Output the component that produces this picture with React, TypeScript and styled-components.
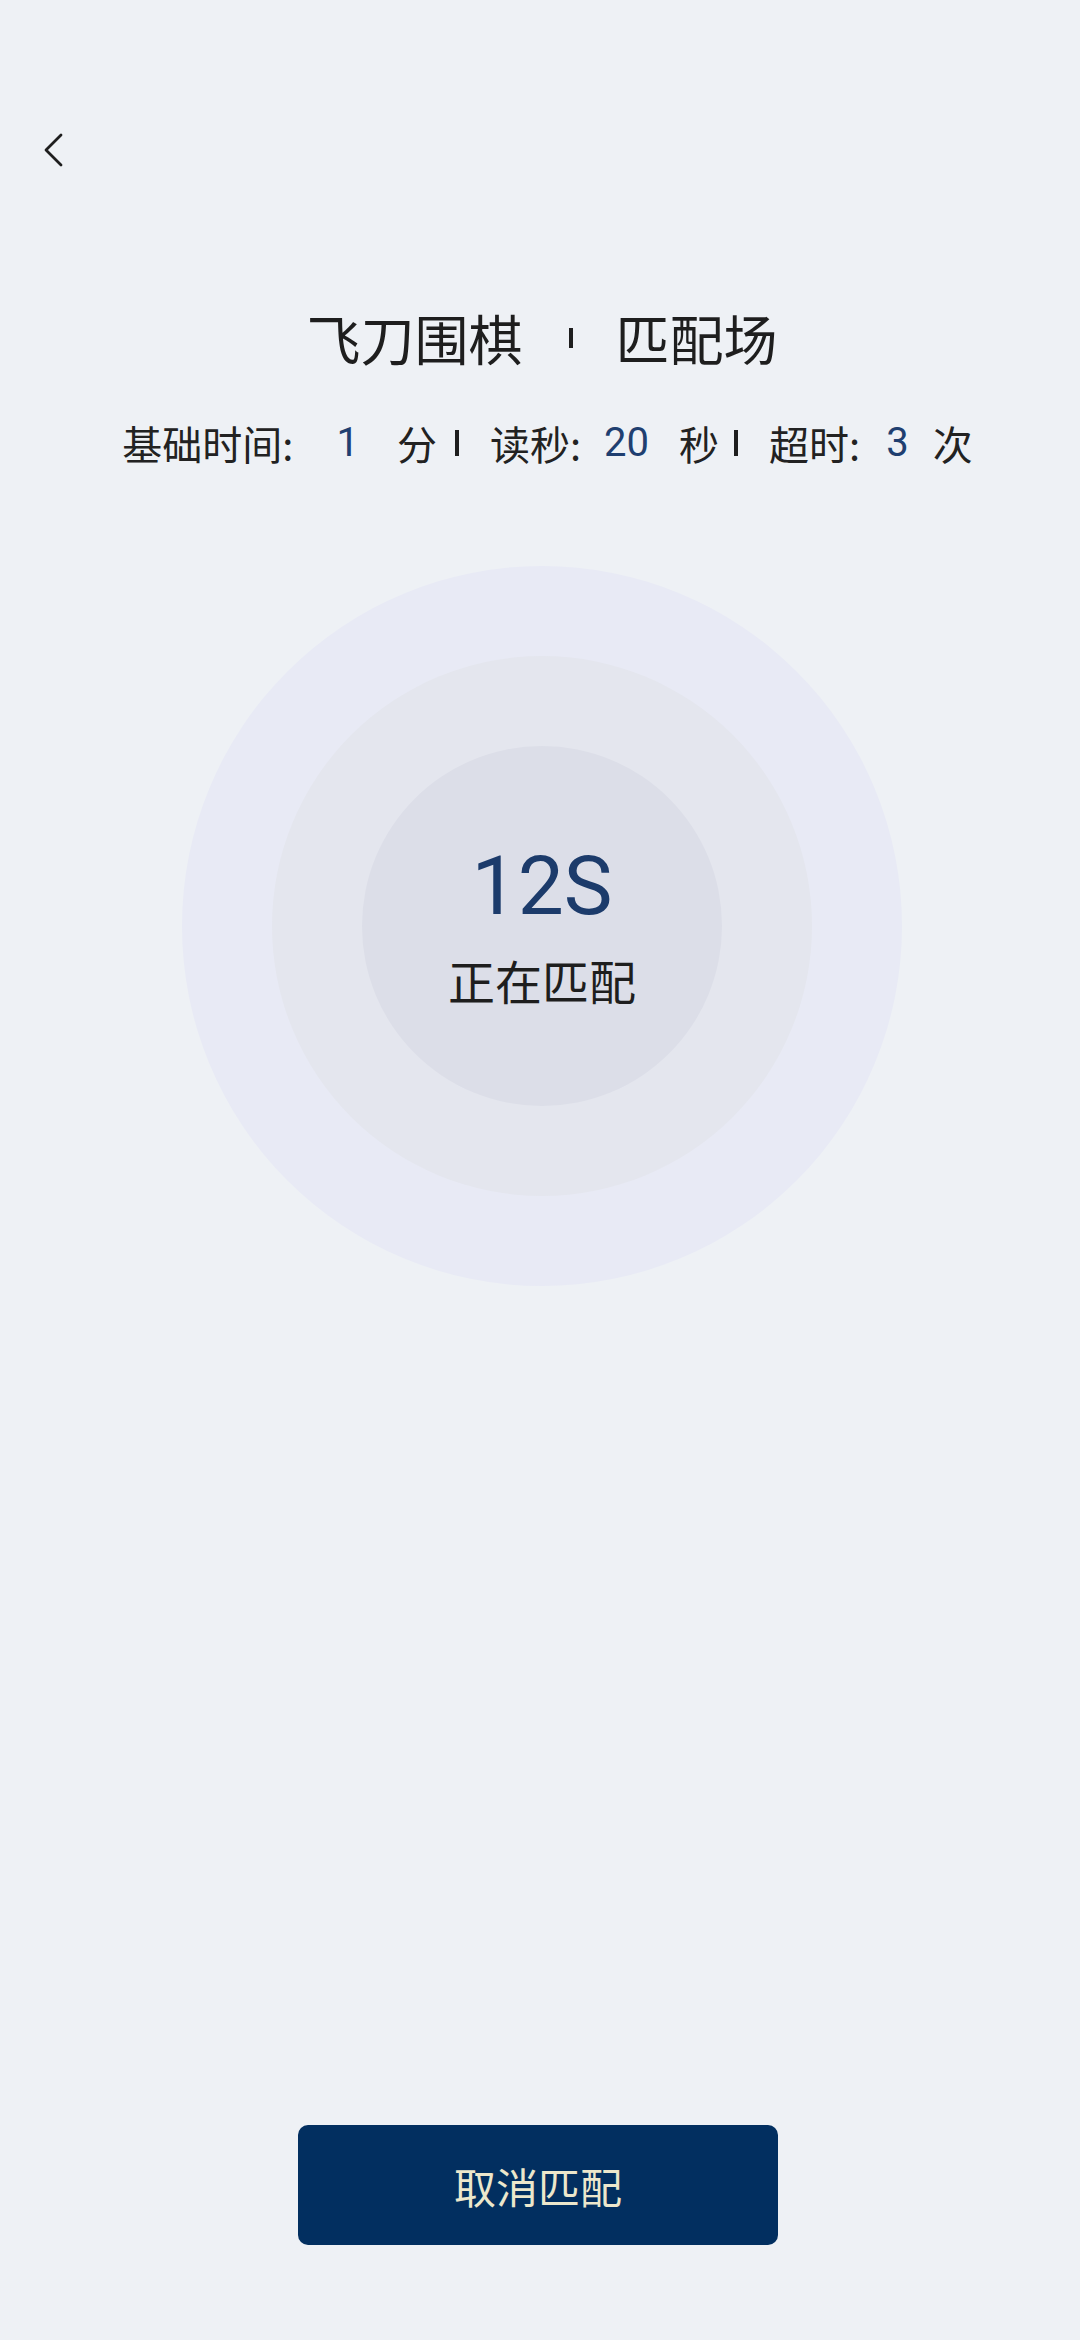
import React from "react";
import styled, { createGlobalStyle } from "styled-components";

const Global = createGlobalStyle`
  html, body { margin: 0; padding: 0; background: #eef1f5; }
  body { font-family: "Noto Sans CJK SC", "Noto Sans", Roboto, sans-serif; }
  * { box-sizing: border-box; }
`;

const Page = styled.div`
  width: 1080px;
  min-height: 2340px;
  background: #eef1f5;
  display: flex;
  flex-direction: column;
  align-items: stretch;
  padding-bottom: 95px;
`;

const Nav = styled.div`
  height: 165px;
  padding: 133px 0 0 40px;
  display: flex;
  align-items: flex-start;
`;

const BackButton = styled.button`
  border: none;
  background: transparent;
  padding: 0;
  width: 26px;
  height: 34px;
  display: flex;
  align-items: center;
  justify-content: center;
  cursor: pointer;
`;

const Title = styled.h1`
  margin: 143px 0 0;
  height: 60px;
  display: flex;
  align-items: center;
  justify-content: center;
  font-size: 54px;
  font-weight: 400;
  line-height: 60px;
  color: #1e1e1e;
  padding-left: 4px;
`;

const Divider = styled.span<{ $h: number; $ml: number; $mr: number }>`
  display: inline-block;
  width: 4px;
  height: ${(p) => p.$h}px;
  background: #1e1e1e;
  margin: 0 ${(p) => p.$mr}px 0 ${(p) => p.$ml}px;
`;

const Rules = styled.div`
  margin-top: 51px;
  height: 48px;
  display: flex;
  align-items: center;
  justify-content: center;
  font-size: 40px;
  line-height: 48px;
  color: #222;
  padding-left: 15px;
`;

const Label = styled.span``;

const Value = styled.span<{ $ml: number; $mr: number }>`
  color: #1f3f70;
  font-family: Roboto, "Noto Sans", sans-serif;
  font-size: 40px;
  margin: 0 ${(p) => p.$mr}px 0 ${(p) => p.$ml}px;
`;

const Unit = styled.span``;

const Radar = styled.div`
  margin: 99px auto 0;
  width: 720px;
  height: 720px;
  border-radius: 50%;
  background: #e8eaf5;
  display: flex;
  align-items: center;
  justify-content: center;
  transform: translateX(2px);
`;

const Ring = styled.div`
  width: 540px;
  height: 540px;
  border-radius: 50%;
  background: #e4e6ee;
  display: flex;
  align-items: center;
  justify-content: center;
`;

const Core = styled.div`
  width: 360px;
  height: 360px;
  border-radius: 50%;
  background: #dcdee8;
  display: flex;
  flex-direction: column;
  align-items: center;
  justify-content: center;
`;

const Seconds = styled.div`
  font-family: Roboto, "Noto Sans", sans-serif;
  font-size: 82px;
  line-height: 90px;
  color: #1c3b6b;
  margin-top: -4px;
`;

const Status = styled.div`
  margin-top: 22px;
  font-size: 47px;
  line-height: 54px;
  color: #1e1e1e;
`;

const Spacer = styled.div`
  flex: 1;
`;

const CancelButton = styled.button`
  align-self: center;
  width: 480px;
  height: 120px;
  border: none;
  border-radius: 10px;
  background: #022f60;
  color: #ece7cc;
  font-family: "Noto Sans CJK SC", sans-serif;
  font-size: 42px;
  cursor: pointer;
  transform: translateX(-2px);
`;

export default function App() {
  return (
    <>
      <Global />
      <Page>
        <Nav>
          <BackButton aria-label="返回">
            <svg width="22" height="34" viewBox="0 0 22 34" fill="none">
              <path d="M19 2 L4 17 L19 32" stroke="#1e1e1e" strokeWidth="2.8" strokeLinecap="round" strokeLinejoin="round" />
            </svg>
          </BackButton>
        </Nav>
        <Title>
          <span>飞刀围棋</span>
          <Divider $h={20} $ml={46} $mr={43} />
          <span>匹配场</span>
        </Title>
        <Rules>
          <Label>基础时间:</Label>
          <Value $ml={43} $mr={38}>1</Value>
          <Unit>分</Unit>
          <Divider $h={26} $ml={18} $mr={31} />
          <Label>读秒:</Label>
          <Value $ml={23} $mr={30}>20</Value>
          <Unit>秒</Unit>
          <Divider $h={26} $ml={15} $mr={31} />
          <Label>超时:</Label>
          <Value $ml={26} $mr={24}>3</Value>
          <Unit>次</Unit>
        </Rules>
        <Radar>
          <Ring>
            <Core>
              <Seconds>12S</Seconds>
              <Status>正在匹配</Status>
            </Core>
          </Ring>
        </Radar>
        <Spacer />
        <CancelButton>取消匹配</CancelButton>
      </Page>
    </>
  );
}
